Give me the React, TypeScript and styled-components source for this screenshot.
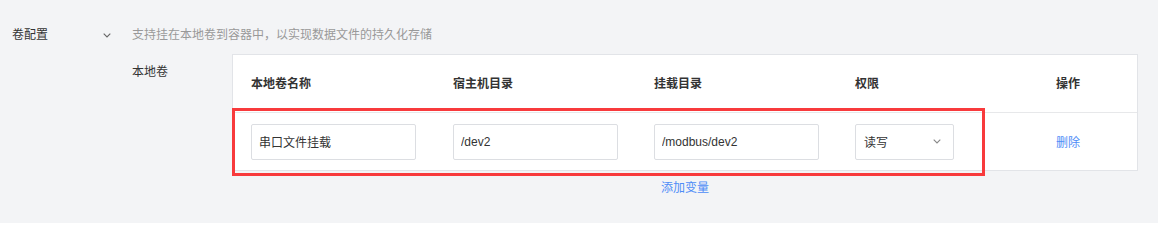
import React from 'react'
import styled, { createGlobalStyle } from 'styled-components'

const GlobalStyle = createGlobalStyle`
	body {
		margin: 0;
		background: #ffffff;
		font-family: "Liberation Sans", "Noto Sans CJK SC", sans-serif;
		font-size: 12px;
		color: #333333;
	}
`

type Volume = {
	name: string
	hostPath: string
	mountPath: string
	permission: string
}

const volumes: Volume[] = [
	{ name: '串口文件挂载', hostPath: '/dev2', mountPath: '/modbus/dev2', permission: '读写' },
]

const columns = ['本地卷名称', '宿主机目录', '挂载目录', '权限', '操作']
const columnWidths = [202, 201, 201, 201]

const Chevron = ({ color = '#666' }: { color?: string }) => (
	<svg width="8" height="5" viewBox="0 0 8 5" fill="none">
		<path d="M0.7 0.7 L4 4 L7.3 0.7" stroke={color} strokeWidth="1.1" />
	</svg>
)

export default function App() {
	return (
		<>
			<GlobalStyle />
			<Panel>
				<TopRow>
					<SectionLabel>
						卷配置
						<Chevron />
					</SectionLabel>
					<Description>支持挂在本地卷到容器中，以实现数据文件的持久化存储</Description>
				</TopRow>
				<VolumeRow>
					<SubLabel>本地卷</SubLabel>
					<TableColumn>
						<TableBox>
							<Table>
								<colgroup>
									{columnWidths.map((w, i) => <col key={i} style={{ width: w }} />)}
									<col />
								</colgroup>
								<thead>
									<tr>
										{columns.map(c => <Th key={c}>{c}</Th>)}
									</tr>
								</thead>
								<tbody>
									{volumes.map(v => (
										<tr key={v.name}>
											<Td><TextInput defaultValue={v.name} /></Td>
											<Td><TextInput defaultValue={v.hostPath} /></Td>
											<Td><TextInput defaultValue={v.mountPath} /></Td>
											<Td>
												<Select>
													<span>{v.permission}</span>
													<Chevron color="#888" />
												</Select>
											</Td>
											<Td><Link>删除</Link></Td>
										</tr>
									))}
								</tbody>
							</Table>
							<Highlight />
						</TableBox>
						<AddLink>添加变量</AddLink>
					</TableColumn>
				</VolumeRow>
			</Panel>
		</>
	)
}

const Panel = styled.div`
	width: 1158px;
	height: 223px;
	box-sizing: border-box;
	background: #f3f4f6;
	padding-top: 26px;
`

const TopRow = styled.div`
	display: flex;
	align-items: center;
	height: 18px;
	line-height: 18px;
`

const SectionLabel = styled.div`
	width: 132px;
	box-sizing: border-box;
	padding: 0 21px 0 12px;
	display: flex;
	align-items: center;
	justify-content: space-between;
	color: #333;
`

const Description = styled.div`
	color: #999;
`

const VolumeRow = styled.div`
	display: flex;
	margin-top: 10px;
	padding-left: 132px;
`

const SubLabel = styled.div`
	width: 100px;
	padding-top: 10px;
	line-height: 16px;
	color: #333;
`

const TableColumn = styled.div`
	display: flex;
	flex-direction: column;
	width: 906px;
`

const TableBox = styled.div`
	position: relative;
	background: #fff;
	border: 1px solid #e2e4e8;
`

const Table = styled.table`
	width: 904px;
	table-layout: fixed;
	border-collapse: collapse;
`

const Th = styled.th`
	height: 57px;
	padding: 0 0 0 18px;
	text-align: left;
	font-weight: bold;
	color: #333;
	border-bottom: 1px solid #e7e8ea;
	line-height: 16px;
`

const Td = styled.td`
	height: 57px;
	padding: 0 0 0 18px;
	vertical-align: middle;
`

const TextInput = styled.input`
	display: block;
	width: 165px;
	height: 36px;
	box-sizing: border-box;
	border: 1px solid #dcdee2;
	border-radius: 2px;
	padding: 0 7px;
	font-family: inherit;
	font-size: 12px;
	color: #333;
	outline: none;
`

const Select = styled.div`
	width: 99px;
	height: 36px;
	box-sizing: border-box;
	border: 1px solid #dcdee2;
	border-radius: 2px;
	padding: 0 12px 0 8px;
	display: flex;
	align-items: center;
	justify-content: space-between;
	color: #333;
`

const Link = styled.a`
	color: #4e8cf7;
	cursor: pointer;
`

const Highlight = styled.div`
	position: absolute;
	left: -1px;
	top: 53px;
	width: 753px;
	height: 68px;
	box-sizing: border-box;
	border: 3px solid #f83a3c;
	pointer-events: none;
`

const AddLink = styled.a`
	margin-top: 9px;
	text-align: center;
	line-height: 16px;
	color: #4e8cf7;
	cursor: pointer;
`
